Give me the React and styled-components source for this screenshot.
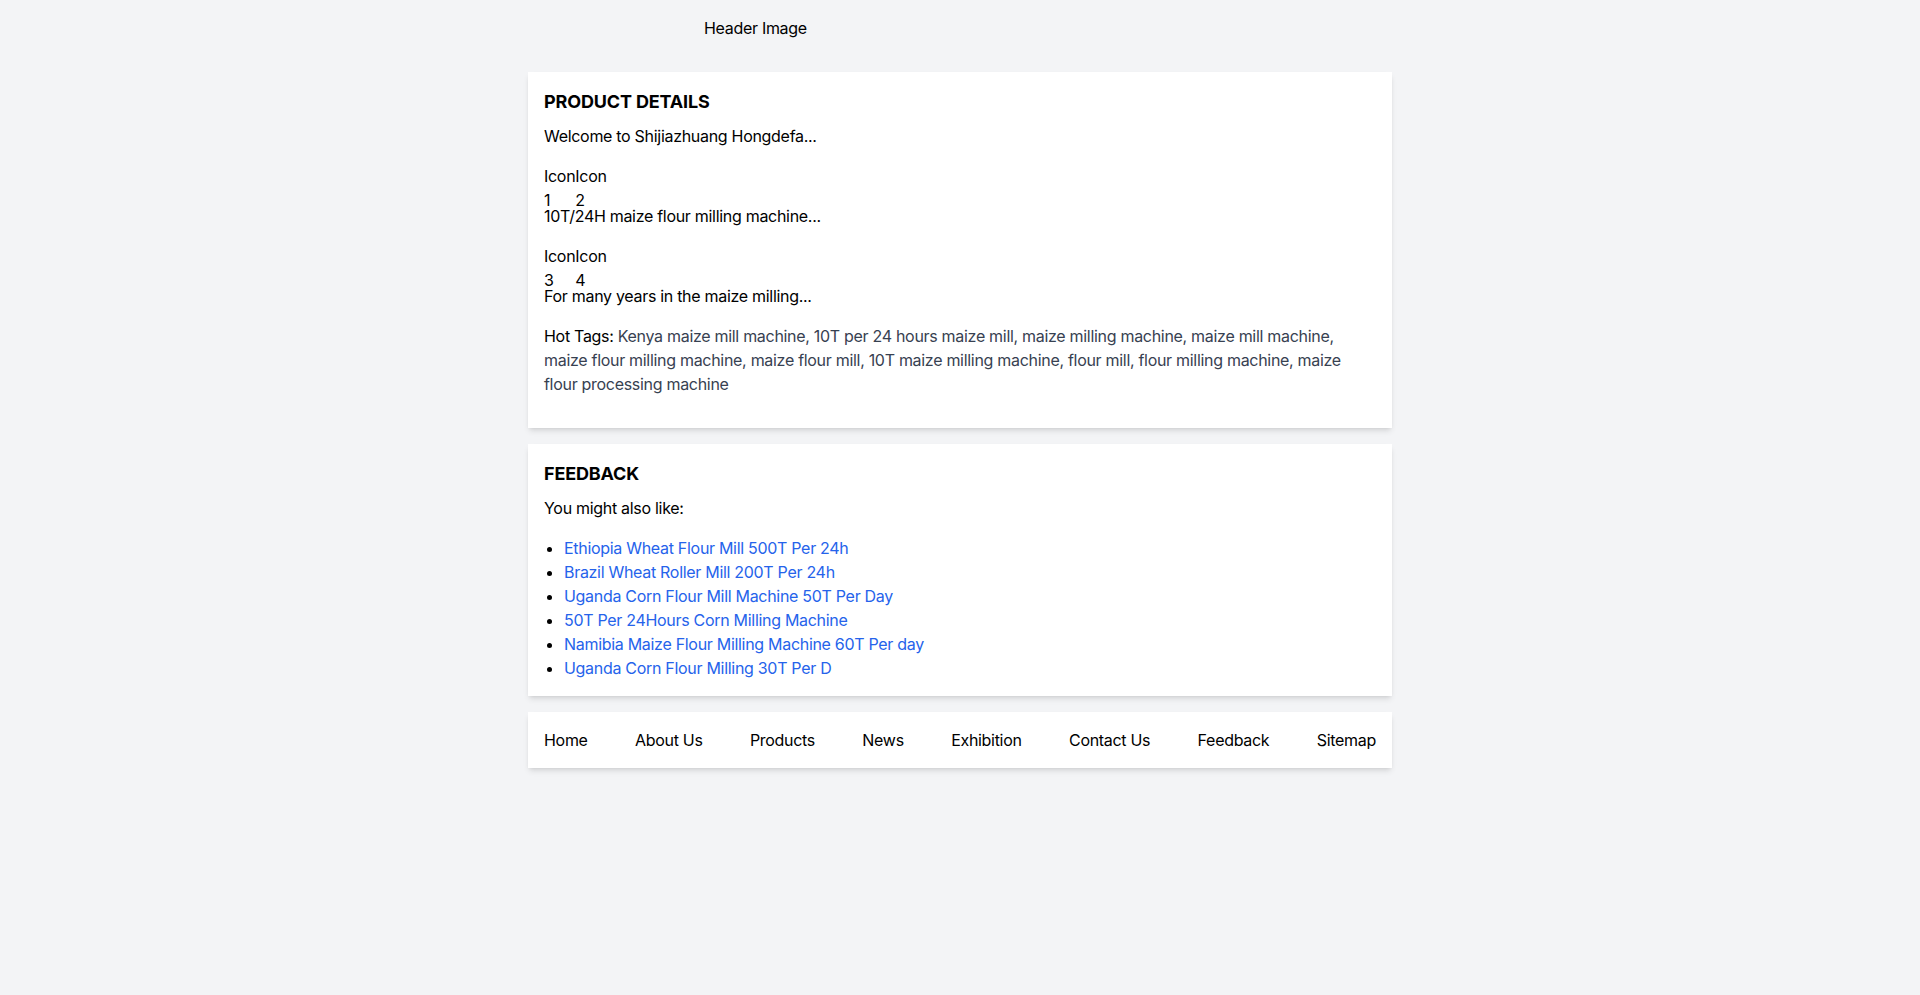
import React from 'react';
import styled, { createGlobalStyle } from 'styled-components';

const ICON_GROUPS = [
  { text: 'Welcome to Shijiazhuang Hongdefa...', icons: null },
  { text: null, icons: ['1', '2'] },
  { text: '10T/24H maize flour milling machine...', icons: null },
  { text: null, icons: ['3', '4'] },
  { text: 'For many years in the maize milling...', icons: null },
];

const HOT_TAGS =
  'Kenya maize mill machine, 10T per 24 hours maize mill, maize milling machine, maize mill machine, maize flour milling machine, maize flour mill, 10T maize milling machine, flour mill, flour milling machine, maize flour processing machine';

const RELATED = [
  'Ethiopia Wheat Flour Mill 500T Per 24h',
  'Brazil Wheat Roller Mill 200T Per 24h',
  'Uganda Corn Flour Mill Machine 50T Per Day',
  '50T Per 24Hours Corn Milling Machine',
  'Namibia Maize Flour Milling Machine 60T Per day',
  'Uganda Corn Flour Milling 30T Per D',
];

const NAV = ['Home', 'About Us', 'Products', 'News', 'Exhibition', 'Contact Us', 'Feedback', 'Sitemap'];

const App = () => {
  return (
    <>
      <GlobalStyle />
      <Page>
        <Header>
          <HeaderImage>Header Image</HeaderImage>
        </Header>
        <Main>
          <Card>
            <CardTitle>PRODUCT DETAILS</CardTitle>
            {ICON_GROUPS.map((group, i) =>
              group.text ? (
                <Paragraph key={i}>{group.text}</Paragraph>
              ) : (
                <IconRow key={i}>
                  {group.icons.map((num) => (
                    <IconItem key={num}>
                      <IconLabel>Icon</IconLabel>
                      <IconNumber>{num}</IconNumber>
                    </IconItem>
                  ))}
                </IconRow>
              )
            )}
            <Tags>
              <TagsLabel>Hot Tags:</TagsLabel> {HOT_TAGS}
            </Tags>
          </Card>
          <Card>
            <CardTitle>FEEDBACK</CardTitle>
            <Paragraph>You might also like:</Paragraph>
            <RelatedList>
              {RELATED.map((item) => (
                <li key={item}>
                  <RelatedLink href="#">{item}</RelatedLink>
                </li>
              ))}
            </RelatedList>
          </Card>
          <NavCard>
            {NAV.map((item) => (
              <NavLink key={item} href="#">
                {item}
              </NavLink>
            ))}
          </NavCard>
        </Main>
      </Page>
    </>
  );
};

const GlobalStyle = createGlobalStyle`
  html, body {
    margin: 0;
    background: #f3f4f6;
  }
  body {
    font-family: Inter, Roboto, "Noto Sans", sans-serif;
    font-size: 16px;
    line-height: 24px;
    letter-spacing: -0.3px;
    color: #000;
  }
  * {
    box-sizing: border-box;
  }
`;

const Page = styled.div`
  min-height: 995px;
  background: #f3f4f6;
`;

const Header = styled.header`
  display: flex;
  justify-content: center;
  padding: 16px 0 32px;
`;

const HeaderImage = styled.div`
  width: 512px;
  height: 24px;
  line-height: 24px;
`;

const Main = styled.main`
  max-width: 896px;
  margin: 0 auto;
  padding: 0 16px;
  display: flex;
  flex-direction: column;
  gap: 16px;
`;

const Card = styled.section`
  background: #fff;
  padding: 16px;
  box-shadow: 0 4px 6px -1px rgba(0, 0, 0, 0.1), 0 2px 4px -2px rgba(0, 0, 0, 0.1);
`;

const CardTitle = styled.h2`
  margin: 0 0 8px;
  font-size: 18px;
  line-height: 28px;
  font-weight: 700;
  letter-spacing: -0.15px;
`;

const Paragraph = styled.p`
  margin: 0 0 16px;
`;

const IconRow = styled.div`
  display: flex;
  height: 40px;
`;

const IconItem = styled.div`
  display: flex;
  flex-direction: column;
`;

const IconLabel = styled.span`
  height: 24px;
`;

const IconNumber = styled.span`
  height: 24px;
`;

const Tags = styled.div`
  margin-bottom: 16px;
  color: #374151;
`;

const TagsLabel = styled.span`
  color: #000;
`;

const RelatedList = styled.ul`
  margin: 0;
  padding-left: 20px;
  list-style: disc;
`;

const RelatedLink = styled.a`
  color: #2563eb;
  text-decoration: none;
`;

const NavCard = styled.nav`
  background: #fff;
  padding: 16px;
  display: flex;
  justify-content: space-between;
  box-shadow: 0 4px 6px -1px rgba(0, 0, 0, 0.1), 0 2px 4px -2px rgba(0, 0, 0, 0.1);
`;

const NavLink = styled.a`
  color: #000;
  text-decoration: none;
`;

export default App;
